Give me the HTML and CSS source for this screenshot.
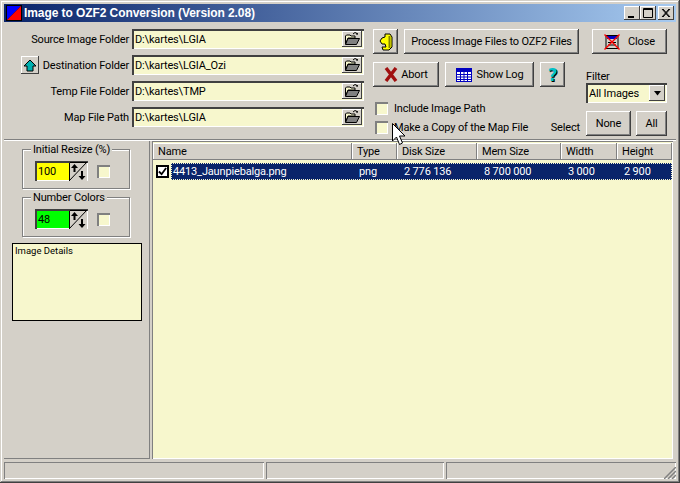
FILE: index.html
```html
<!DOCTYPE html>
<html lang="en">
<head>
    <meta charset="UTF-8">
    <title>Image to OZF2 Conversion</title>
    <link rel="stylesheet" href="styles.css">
</head>
<body>
    <svg class="icon-defs" width="0" height="0">
        <symbol id="folder" viewBox="0 0 16 14">
            <path d="M9 2 L11 0.5 L14 2 M13 1 V3" fill="none" stroke="#000"/>
            <path d="M1.5 4 L2.5 3 H6 L7 4 H11 V6 H4 L1.5 12 Z" fill="#f7f7cd" stroke="#000"/>
            <path d="M1.5 12.5 L4 6.5 H15.5 L12.5 12.5 Z" fill="#808080" stroke="#000"/>
        </symbol>
        <symbol id="spin" viewBox="0 0 18 19">
            <rect width="18" height="19" fill="#d4d0c8"/>
            <path d="M0.5 19 V0.5 H18 M0 19 L18 0" fill="none" stroke="#000"/>
            <path d="M5.500 2 L2 6 H4.500 V10 H6.500 V6 H9 Z M12 9 V14 H9.500 L13 18 L16.500 14 H14 V9 Z" fill="#000"/>
        </symbol>
    </svg>

    <div class="window">
        <div class="title-bar">
            <svg class="title-icon" width="16" height="16" viewBox="0 0 16 16">
                <rect width="16" height="16" fill="#000"/>
                <path d="M1 1 H15 L1 15 Z" fill="#0000ff"/>
                <path d="M15 1 V15 H1 Z" fill="#ff0000"/>
            </svg>
            <span class="title-text">Image to OZF2 Conversion (Version 2.08)</span>
            <div class="title-btns">
                <button class="title-btn"><svg width="16" height="14"><rect x="4" y="10" width="6" height="2"/></svg></button>
                <button class="title-btn"><svg width="16" height="14"><path d="M3.5 2.5 H12.5 V11.5 H3.5 Z M3 3.5 H13" fill="none" stroke="#000"/></svg></button>
                <button class="title-btn close-x"><svg width="16" height="14"><path d="M4 3 L11 11 M5 3 L12 11 M11 3 L4 11 M12 3 L5 11" stroke="#000"/></svg></button>
            </div>
        </div>

        <div class="top-panel">
            <div class="folders">
                <div class="folder-row">
                    <div class="folder-label">Source Image Folder</div>
                    <div class="field"><span>D:\kartes\LGIA</span><button class="browse"><svg width="16" height="14"><use href="#folder"/></svg></button></div>
                </div>
                <div class="folder-row">
                    <div class="folder-label">
                        <button class="btn arrow-btn">
                            <svg width="14" height="13" viewBox="0 0 14 13"><path d="M7 1 L13 7 H10 V12 H4 V7 H1 Z" fill="#00b0b0" stroke="#000"/></svg>
                        </button>
                        Destination Folder
                    </div>
                    <div class="field"><span>D:\kartes\LGIA_Ozi</span><button class="browse"><svg width="16" height="14"><use href="#folder"/></svg></button></div>
                </div>
                <div class="folder-row">
                    <div class="folder-label">Temp File Folder</div>
                    <div class="field"><span>D:\kartes\TMP</span><button class="browse"><svg width="16" height="14"><use href="#folder"/></svg></button></div>
                </div>
                <div class="folder-row">
                    <div class="folder-label">Map File Path</div>
                    <div class="field"><span>D:\kartes\LGIA</span><button class="browse"><svg width="16" height="14"><use href="#folder"/></svg></button></div>
                </div>
            </div>

            <div class="actions">
                <div class="action-row">
                    <button class="btn icon-btn">
                        <svg width="14" height="18" viewBox="0 0 14 18"><path d="M6 1 H11 L13 4 V14 L10 17 H4 L3 14 H7 L6 11 H3 L1 8 L3 5 L6 4 Z" fill="#ffff00" stroke="#000"/><path d="M10.500 3 V15" stroke="#808000" stroke-width="2"/></svg>
                    </button>
                    <button class="btn process-btn">Process Image Files to OZF2 Files</button>
                </div>
                <div class="action-row">
                    <button class="btn abort-btn">
                        <svg width="14" height="15" viewBox="0 0 14 15"><path d="M2 1 L12 14 M12 1 L2 14" stroke="#a01010" stroke-width="3.4"/></svg>
                        Abort
                    </button>
                    <button class="btn log-btn">
                        <svg width="16" height="14" viewBox="0 0 16 14"><rect x="0.5" y="0.5" width="15" height="13" fill="#fff" stroke="#0000c0"/><rect x="1" y="1" width="14" height="3" fill="#0000c0"/><path d="M1 6.500 H15 M1 9 H15 M1 11.500 H15 M4.500 4 V13 M8 4 V13 M11.500 4 V13" stroke="#0000c0"/></svg>
                        Show Log
                    </button>
                    <button class="btn help-btn">?</button>
                </div>
                <div class="checks">
                    <div class="check-row"><span class="check"></span>Include Image Path</div>
                    <div class="check-row"><span class="check"></span>Make a Copy of the Map File<span class="select-label">Select</span></div>
                </div>
            </div>

            <div class="side">
                <button class="btn close-btn">
                    <svg width="16" height="16" viewBox="0 0 16 16"><rect x="2" y="1.500" width="12" height="13" fill="#d4d0c8" stroke="#000"/><rect x="3" y="2" width="10" height="3" fill="#0000c0"/><path d="M4 8.500 H12 M4 11 H12" stroke="#000"/><path d="M0.500 0.500 L15.500 15.500 M15.500 0.500 L0.500 15.500" stroke="#ff0000" stroke-width="1.400"/></svg>
                    Close
                </button>
                <div class="filter-label">Filter</div>
                <div class="combo"><span>All Images</span><button class="combo-arrow"><svg width="9" height="5"><path d="M1 0 H8 L4.500 4.500 Z"/></svg></button></div>
                <div class="select-btns">
                    <button class="btn none-btn">None</button>
                    <button class="btn all-btn">All</button>
                </div>
            </div>
        </div>

        <div class="bottom">
            <div class="left-panel">
                <div class="group">
                    <span class="group-title">Initial Resize (%)</span>
                    <div class="spin-row">
                        <div class="spin-input yellow"><span>100</span><svg width="18" height="19"><use href="#spin"/></svg></div>
                        <span class="check"></span>
                    </div>
                </div>
                <div class="group">
                    <span class="group-title">Number Colors</span>
                    <div class="spin-row">
                        <div class="spin-input green"><span>48</span><svg width="18" height="19"><use href="#spin"/></svg></div>
                        <span class="check"></span>
                    </div>
                </div>
                <div class="details">Image Details</div>
            </div>

            <div class="list">
                <div class="list-head">
                    <div>Name</div>
                    <div>Type</div>
                    <div>Disk Size</div>
                    <div>Mem Size</div>
                    <div>Width</div>
                    <div>Height</div>
                </div>
                <div class="list-row">
                    <span class="list-check"><svg width="9" height="9" viewBox="0 0 10 10"><path d="M1 5 L4 8 L9 1" fill="none" stroke="#000" stroke-width="2"/></svg></span>
                    <div class="selected">
                        <div class="cell-name">4413_Jaunpiebalga.png</div>
                        <div>png</div>
                        <div>2 776 136</div>
                        <div>8 700 000</div>
                        <div>3 000</div>
                        <div>2 900</div>
                    </div>
                </div>
            </div>
        </div>

        <div class="status-bar">
            <div class="status s1"></div>
            <div class="status s2"></div>
            <div class="status s3">
                <svg class="grip" width="12" height="12"><path d="M12 0 L0 12 M12 4 L4 12 M12 8 L8 12" stroke="#808080" stroke-width="1.500"/></svg>
            </div>
        </div>

        <!-- mouse pointer in the shot -->
        <svg class="cursor" width="14" height="24" viewBox="0 0 14 24">
            <path d="M0.500 0.500 V18 L4.500 14 L7.500 21.500 L10.500 20 L7.500 13 H13 Z" fill="#fff" stroke="#000"/>
        </svg>
    </div>
</body>
</html>
```

FILE: styles.css
```css
* {
    margin: 0;
    padding: 0;
    box-sizing: border-box;
    font-family: Roboto, 'Liberation Sans', sans-serif;
}

body {
    background-color: #d4d0c8;
    color: #000;
    font-size: 11px;
    letter-spacing: -0.16px;
    overflow: hidden;
}

.icon-defs {
    display: block;
    height: 0;
}

button {
    font-size: 11px;
    letter-spacing: -0.16px;
    color: #000;
    border: none;
    background-color: #d4d0c8;
}

svg {
    display: block;
}

.window {
    position: relative;
    width: 680px;
    height: 483px;
    padding: 4px;
    overflow: hidden;
    background-color: #d4d0c8;
    box-shadow: inset -1px -1px #404040, inset 1px 1px #d4d0c8, inset -2px -2px #808080, inset 2px 2px #fff;
}

.title-bar {
    display: flex;
    align-items: center;
    height: 18px;
    padding: 0 2px;
    background: linear-gradient(to right, #0a246a, #a6caf0);
    color: #fff;
}

.title-icon {
    margin-right: 2px;
}

.title-text {
    font-family: 'Liberation Sans', sans-serif;
    font-size: 12px;
    font-weight: bold;
    letter-spacing: -0.08px;
}

.title-btns {
    display: flex;
    margin-left: auto;
}

.title-btn {
    width: 16px;
    height: 14px;
    box-shadow: inset -1px -1px #404040, inset 1px 1px #fff;
}

.close-x {
    margin-left: 2px;
}

.btn {
    display: flex;
    align-items: center;
    justify-content: center;
    height: 25px;
    box-shadow: inset -1px -1px #404040, inset 1px 1px #fff, inset -2px -2px #808080;
}

.top-panel {
    display: flex;
    height: 117px;
    margin-top: 1px;
    padding-top: 6px;
    border-bottom: 1px solid #808080;
    box-shadow: 0 1px #fff;
}

.folders {
    display: flex;
    flex-direction: column;
    gap: 6px;
    width: 360px;
}

.folder-row {
    display: flex;
    gap: 3px;
    height: 20px;
}

.folder-label {
    display: flex;
    align-items: center;
    justify-content: flex-end;
    width: 125px;
    white-space: nowrap;
}

.arrow-btn {
    width: 18px;
    height: 18px;
    margin-right: auto;
    margin-left: 17px;
    flex-shrink: 0;
    box-shadow: inset -1px -1px #404040, inset 1px 1px #fff;
}

.field {
    display: flex;
    align-items: center;
    justify-content: space-between;
    width: 232px;
    padding: 2px 2px 2px 3px;
    background-color: #f7f7cd;
    box-shadow: inset 2px 2px #404040, inset -1px -1px #fff;
}

.browse {
    display: flex;
    align-items: center;
    justify-content: center;
    width: 20px;
    height: 16px;
    box-shadow: inset -1px -1px #404040, inset 1px 1px #fff;
}

.actions {
    display: flex;
    flex-direction: column;
    width: 206px;
    margin-left: 9px;
}

.action-row {
    display: flex;
    gap: 6px;
    margin-bottom: 8px;
}

.icon-btn {
    width: 25px;
}

.process-btn {
    width: 175px;
}

.abort-btn {
    gap: 3px;
    width: 66px;
}

.log-btn {
    gap: 5px;
    width: 89px;
}

.help-btn {
    width: 25px;
    color: #00c0c8;
    font-family: 'DejaVu Sans', sans-serif;
    font-size: 17px;
    font-weight: bold;
    text-shadow: 1px 1px #000;
}

.checks {
    display: flex;
    flex-direction: column;
    gap: 6px;
    margin: 7px 0 0 2px;
}

.check-row {
    display: flex;
    align-items: center;
    gap: 6px;
    height: 13px;
    white-space: nowrap;
}

.select-label {
    margin-left: auto;
    margin-right: -1px;
}

.check {
    display: block;
    flex-shrink: 0;
    width: 13px;
    height: 13px;
    background-color: #f7f7cd;
    box-shadow: inset 2px 2px #808080, inset -1px -1px #fff;
}

.side {
    display: flex;
    flex-direction: column;
    width: 81px;
    margin-left: 7px;
}

.close-btn {
    gap: 8px;
    width: 75px;
    margin-left: 6px;
}

.filter-label {
    margin-top: 16px;
    height: 13px;
    line-height: 13px;
}

.combo {
    display: flex;
    align-items: center;
    justify-content: space-between;
    height: 20px;
    padding: 2px 2px 2px 3px;
    background-color: #f7f7cd;
    box-shadow: inset 2px 2px #404040, inset -1px -1px #fff;
}

.combo-arrow {
    display: flex;
    align-items: center;
    justify-content: center;
    width: 16px;
    height: 16px;
    box-shadow: inset -1px -1px #404040, inset 1px 1px #fff;
}

.select-btns {
    display: flex;
    gap: 5px;
    margin-top: 8px;
}

.none-btn {
    width: 45px;
}

.all-btn {
    width: 31px;
}

.bottom {
    display: flex;
    height: 318px;
    margin-top: 1px;
}

.left-panel {
    width: 146px;
    padding: 8px 0 0 8px;
    border-right: 1px solid #808080;
    border-bottom: 1px solid #808080;
}

.group {
    position: relative;
    width: 108px;
    height: 40px;
    margin: 0 0 8px 10px;
    padding: 11px 0 0 12px;
    border: 1px solid #808080;
    box-shadow: 1px 1px #fff, inset 1px 1px #fff;
}

.group-title {
    position: absolute;
    top: -7px;
    left: 8px;
    padding: 0 2px;
    line-height: 14px;
    white-space: nowrap;
    background-color: #d4d0c8;
}

.spin-row {
    display: flex;
    align-items: center;
    gap: 9px;
}

.spin-input {
    display: flex;
    justify-content: space-between;
    align-items: center;
    width: 53px;
    height: 20px;
    padding: 0 1px 0 3px;
    box-shadow: inset 2px 2px #404040, inset -1px -1px #fff;
}

.yellow {
    background-color: #ffff00;
}

.green {
    background-color: #00ff00;
}

.details {
    width: 130px;
    height: 78px;
    margin-top: -2px;
    padding: 1px 2px;
    border: 1px solid #000;
    background-color: #f7f7cd;
    font-size: 9.5px;
    letter-spacing: 0;
    line-height: 12px;
}

.list {
    width: 521px;
    margin-left: 2px;
    padding: 2px 1px;
    background-color: #f7f7cd;
    box-shadow: inset 1px 1px #808080, inset -1px -1px #fff;
}

.list-head {
    display: grid;
    grid-template-columns: 199px 45px 80px 84px 56px 55px;
    height: 17px;
    background-color: #d4d0c8;
}

.list-head div {
    padding: 1px 0 0 5px;
    line-height: 15px;
    box-shadow: inset -1px -1px #808080, inset 1px 1px #fff;
}

.list-row {
    display: flex;
    align-items: center;
    height: 17px;
    margin-top: 3px;
    padding-left: 3px;
}

.list-check {
    display: flex;
    align-items: center;
    justify-content: center;
    flex-shrink: 0;
    width: 13px;
    height: 13px;
    margin-right: 2px;
    border: 2px solid #000;
    background-color: #fff;
}

.selected {
    display: grid;
    grid-template-columns: 182px 45px 80px 84px 56px 53px;
    width: 501px;
    height: 17px;
    line-height: 15px;
    background-color: #0a246a;
    color: #fff;
    border: 1px dotted #f7f7cd;
}

.selected div {
    padding-left: 5px;
}

.selected .cell-name {
    padding-left: 1px;
    white-space: nowrap;
}

.status-bar {
    display: flex;
    gap: 2px;
    height: 17px;
    margin-top: 3px;
}

.status {
    box-shadow: inset 1px 1px #808080, inset -1px -1px #fff;
}

.s1 {
    width: 260px;
}

.s2 {
    width: 178px;
}

.s3 {
    position: relative;
    flex: 1;
}

.grip {
    position: absolute;
    right: 0;
    bottom: 0;
}

.cursor {
    position: absolute;
    left: 392px;
    top: 123px;
}
```
